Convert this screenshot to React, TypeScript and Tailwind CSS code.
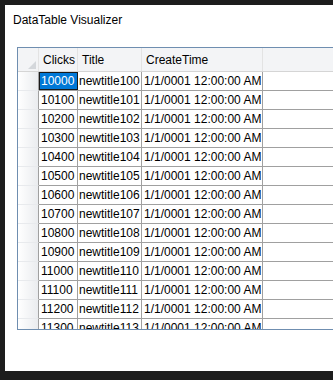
import React from "react";

const rows = Array.from({ length: 14 }, (_, i) => ({
  clicks: 10000 + i * 100,
  title: `newtitle${100 + i}`,
  createTime: "1/1/0001 12:00:00 AM",
}));

const App = () => {
  return (
    <div
      className="w-[333px] h-[380px] bg-[#1d1d1d] pt-[5px] pl-[5px] overflow-hidden"
      style={{ fontFamily: '"Liberation Sans", Arial, sans-serif' }}
    >
      <div className="bg-white h-[366px] w-[328px] overflow-hidden flex flex-col">
        <div className="pl-[8px] pt-[7px] h-[42px] text-[12px] leading-[16px] text-black">
          DataTable Visualizer
        </div>

        <div className="ml-[12px] w-[330px] h-[283px] border border-[#6f8eb0] overflow-hidden text-[12px] text-black">
          {/* header */}
          <div className="flex h-[24px] bg-[#f3f4f6] border-b border-[#d5d5d5]">
            <div className="w-[21px] shrink-0 relative border-r border-[#e3e3e3]">
              <svg
                className="absolute right-[2px] bottom-[2px]"
                width="8"
                height="8"
                viewBox="0 0 8 8"
              >
                <polygon points="8,0 8,8 0,8" fill="#d4d7db" />
              </svg>
            </div>
            <div className="w-[39px] shrink-0 pl-[4px] flex items-center border-r border-[#e3e3e3]">
              Clicks
            </div>
            <div className="w-[64px] shrink-0 pl-[4px] flex items-center border-r border-[#e3e3e3]">
              Title
            </div>
            <div className="w-[121px] shrink-0 pl-[4px] flex items-center border-r border-[#e3e3e3]">
              CreateTime
            </div>
            <div className="flex-1" />
          </div>

          {/* rows */}
          {rows.map((r, i) => (
            <div key={r.clicks} className="flex h-[19px] border-b border-[#a0a0a0]">
              <div className="w-[21px] shrink-0 bg-gradient-to-r from-white to-[#eaecef] border-r border-[#a0a0a0] -mb-px border-b border-b-[#e8eaed]" />
              <div
                className={
                  i === 0
                    ? "w-[39px] shrink-0 pl-[1px] flex items-center bg-[#0078d7] text-white border border-[#1a1a1a]"
                    : "w-[39px] shrink-0 pl-[2px] flex items-center border-r border-[#a0a0a0]"
                }
              >
                {r.clicks}
              </div>
              <div className="w-[64px] shrink-0 pl-[1px] flex items-center border-r border-[#a0a0a0] whitespace-nowrap overflow-hidden">
                {r.title}
              </div>
              <div className="w-[121px] shrink-0 pl-[2px] flex items-center border-r border-[#a0a0a0] whitespace-nowrap overflow-hidden">
                {r.createTime}
              </div>
              <div className="flex-1" />
            </div>
          ))}
        </div>
      </div>
    </div>
  );
};

export default App;
